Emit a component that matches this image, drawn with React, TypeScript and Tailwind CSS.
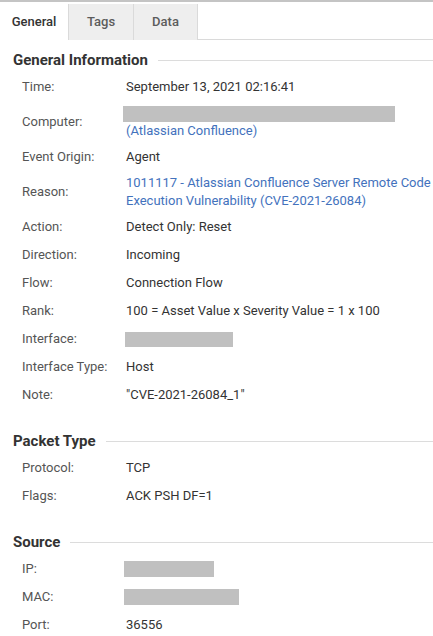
import React from "react";

type Row = { label: string; value: React.ReactNode; tall?: boolean };

const Box = ({ w, h = 16 }: { w: number; h?: number }) => (
  <div className="bg-[#c0c0c0] -ml-[3px]" style={{ width: w, height: h }} />
);

function Section({ title, rows, first }: { title: string; rows: Row[]; first?: boolean }) {
  return (
    <div className={first ? "" : "mt-[19px]"}>
      <div className="flex items-center h-[26px] pl-[13px]">
        <span className="text-[15px] font-bold text-[#333]">{title}</span>
        <div className="flex-1 ml-[10px] h-px bg-[#dcdcdc]" />
      </div>
      <div>
        {rows.map((r) => (
          <div
            key={r.label}
            className={`flex items-center min-h-[28px] pl-[22px] ${r.tall ? "py-[3px]" : ""}`}
          >
            <div className="w-[104px] shrink-0 text-[#555]">{r.label}</div>
            <div className="flex-1 text-[#333]">{r.value}</div>
          </div>
        ))}
      </div>
    </div>
  );
}

export default function App() {
  const link = "text-[#4372bd]";
  return (
    <div
      className="w-[433px] h-[636px] bg-white overflow-hidden text-[13px] leading-[18px]"
      style={{ fontFamily: "Roboto, 'Liberation Sans', sans-serif" }}
    >
      <div className="h-[2px] bg-[#c4c4c4]" />
      <div className="flex mt-[2px] h-[36px]">
        <div className="w-[68px] flex items-center justify-center font-medium text-[#333] bg-white">
          General
        </div>
        <div className="w-[65px] flex items-center justify-center font-medium text-[#5c5c5c] bg-[#eeeeee] border-l border-[#dadada]">
          Tags
        </div>
        <div className="w-[65px] flex items-center justify-center font-medium text-[#5c5c5c] bg-[#eeeeee] border-l border-r border-[#dadada]">
          Data
        </div>
        <div className="flex-1 border-b border-[#dadada]" />
      </div>
      <div className="pt-[7px]">
        <Section
          first
          title="General Information"
          rows={[
            { label: "Time:", value: "September 13, 2021 02:16:41" },
            {
              label: "Computer:",
              tall: true,
              value: (
                <div>
                  <div className="h-[18px] flex items-end">
                    <Box w={272} />
                  </div>
                  <div className={link}>(Atlassian Confluence)</div>
                </div>
              ),
            },
            { label: "Event Origin:", value: "Agent" },
            {
              label: "Reason:",
              tall: true,
              value: (
                <span className={`${link} whitespace-nowrap`}>
                  1011117 - Atlassian Confluence Server Remote Code
                  <br />
                  Execution Vulnerability (CVE-2021-26084)
                </span>
              ),
            },
            { label: "Action:", value: "Detect Only: Reset" },
            { label: "Direction:", value: "Incoming" },
            { label: "Flow:", value: "Connection Flow" },
            { label: "Rank:", value: "100 = Asset Value x Severity Value = 1 x 100" },
            { label: "Interface:", value: <div className="ml-[2px]"><Box w={108} h={15} /></div> },
            { label: "Interface Type:", value: "Host" },
            { label: "Note:", value: "\"CVE-2021-26084_1\"" },
          ]}
        />
        <Section
          title="Packet Type"
          rows={[
            { label: "Protocol:", value: "TCP" },
            { label: "Flags:", value: "ACK PSH DF=1" },
          ]}
        />
        <Section
          title="Source"
          rows={[
            { label: "IP:", value: <div className="ml-[1px]"><Box w={90} /></div> },
            { label: "MAC:", value: <div className="ml-[1px]"><Box w={115} /></div> },
            { label: "Port:", value: "36556" },
          ]}
        />
      </div>
    </div>
  );
}
